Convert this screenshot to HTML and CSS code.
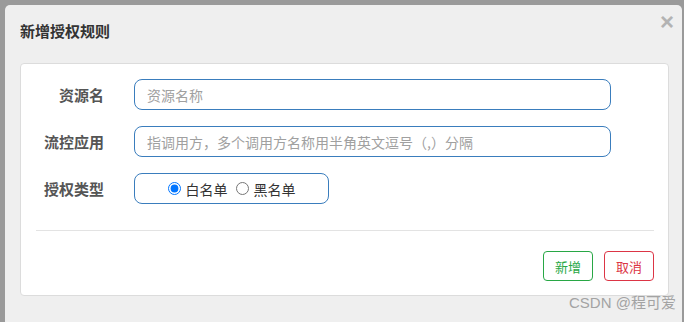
FILE: index.html
```html
<!DOCTYPE html>
<html lang="zh-CN">
  <head>
    <meta charset="UTF-8" />
    <title>新增授权规则</title>
    <link rel="stylesheet" href="styles.css">
  </head>
  <body>
    <div class="modal">
      <div class="modal-header">
        <span class="modal-title">新增授权规则</span>
        <span class="close">×</span>
      </div>

      <div class="card">
        <form class="form">
          <div class="row">
            <label class="label">资源名</label>
            <input class="input" type="text" placeholder="资源名称" />
          </div>
          <div class="row">
            <label class="label">流控应用</label>
            <input class="input" type="text" placeholder="指调用方，多个调用方名称用半角英文逗号（,）分隔" />
          </div>
          <div class="row">
            <label class="label">授权类型</label>
            <div class="radio-box">
              <label class="radio"><input type="radio" name="strategy" checked />白名单</label>
              <label class="radio"><input type="radio" name="strategy" />黑名单</label>
            </div>
          </div>
        </form>

        <div class="divider"></div>

        <div class="footer">
          <button class="btn btn-add">新增</button>
          <button class="btn btn-cancel">取消</button>
        </div>
      </div>
    </div>

    <div class="watermark">CSDN @程可爱</div>
  </body>
</html>
```

FILE: styles.css
```css
body {
  margin: 0;
  background: #9a9a9a;
  font-family: "Noto Sans CJK SC", "Liberation Sans", sans-serif;
  height: 322px;
  overflow: hidden;
}

.modal {
  margin: 5px 2px 0 5px;
  height: 330px;
  background: #efefef;
  border-radius: 5px;
}

.modal-header {
  display: flex;
  justify-content: space-between;
  align-items: flex-start;
  height: 58px;
  padding: 0 8px 0 15px;
}

.modal-title {
  margin-top: 16px;
  font-size: 15px;
  line-height: 20px;
  font-weight: bold;
  color: #333;
}

.close {
  margin-top: 5px;
  font-size: 24px;
  line-height: 24px;
  font-weight: bold;
  color: #b3b3b3;
  font-family: "Liberation Sans", sans-serif;
}

.card {
  margin: 0 13px 0 15px;
  background: #fff;
  border: 1px solid #dcdcdc;
  border-radius: 4px;
  padding: 15px 14px 14px 15px;
}

.form {
  display: flex;
  flex-direction: column;
  gap: 16px;
}

.row {
  display: flex;
  align-items: center;
  gap: 30px;
}

.label {
  width: 68px;
  text-align: right;
  font-size: 15px;
  font-weight: bold;
  color: #555;
}

.input {
  width: 477px;
  height: 31px;
  box-sizing: border-box;
  border: 1px solid #3a7dbd;
  border-radius: 8px;
  padding: 0 12px;
  font-family: inherit;
  font-size: 14px;
  outline: none;
}

.input::placeholder {
  color: #a0a0a0;
}

.radio-box {
  width: 195px;
  height: 31px;
  box-sizing: border-box;
  border: 1px solid #3a7dbd;
  border-radius: 8px;
  display: flex;
  justify-content: center;
  align-items: center;
  gap: 8px;
  font-size: 14px;
  color: #333;
}

.radio {
  display: flex;
  align-items: center;
}

.radio input {
  margin: 0 5px 0 0;
  width: 13px;
  height: 13px;
}

.divider {
  margin-top: 26px;
  border-top: 1px solid #e3e3e3;
}

.footer {
  display: flex;
  justify-content: flex-end;
  gap: 11px;
  margin-top: 20px;
}

.btn {
  width: 50px;
  height: 30px;
  background: #fff;
  border-radius: 4px;
  font-family: inherit;
  font-size: 13px;
  padding: 0;
  cursor: pointer;
}

.btn-add {
  border: 1px solid #28a745;
  color: #28a745;
}

.btn-cancel {
  border: 1px solid #dc3545;
  color: #dc3545;
}

.watermark {
  position: absolute;
  left: 569px;
  top: 293px;
  font-family: "Liberation Sans", "Noto Sans CJK SC", sans-serif;
  font-size: 15px;
  line-height: 20px;
  color: #a3a3a3;
}
```
